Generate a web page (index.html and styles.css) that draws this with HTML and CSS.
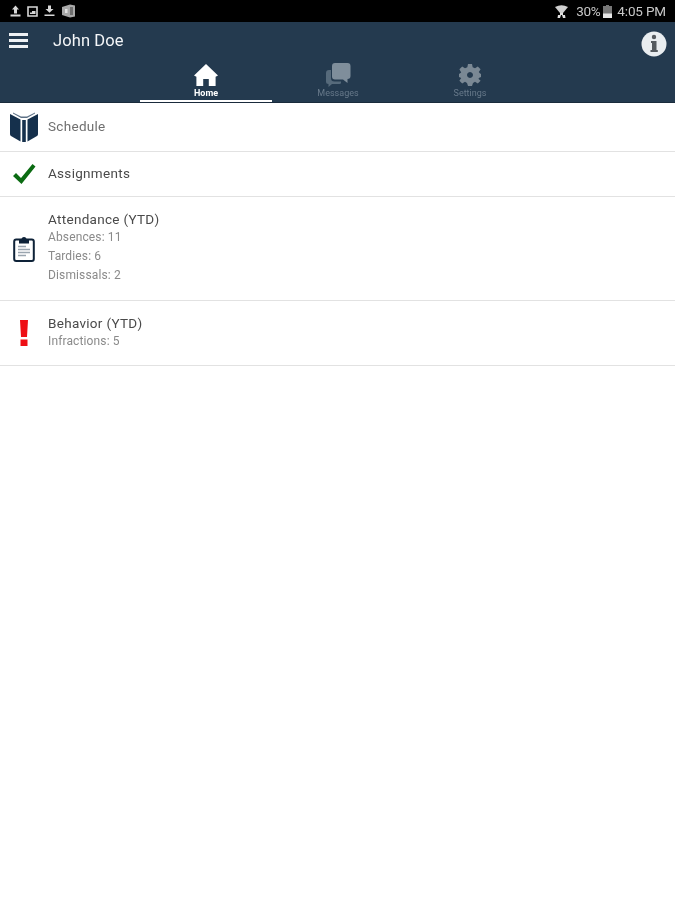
FILE: index.html
```html
<!DOCTYPE html>
<html lang="en">
<head>
<meta charset="utf-8">
<title>John Doe</title>
<link rel="stylesheet" href="styles.css">
</head>
<body>
<div class="status">
  <div class="status-left">
    <svg width="11" height="12" viewBox="0 0 11 12"><path d="M5.5 0.5 L9 4.5 H7 V8.5 H4 V4.5 H2 Z M0.5 9.5 H10.5 V11.5 H0.5 Z" fill="#d8d8d8"/></svg>
    <svg width="11" height="11" viewBox="0 0 11 11"><path d="M1 1 H10 V10 H1 Z" fill="none" stroke="#d8d8d8" stroke-width="1.6"/><path d="M5 5 H8.5 V8 H3 V6.5 H5 Z" fill="#d8d8d8"/></svg>
    <svg width="11" height="12" viewBox="0 0 11 12"><path d="M4 0.5 H7 V4 H9.5 L5.5 7.8 L1.5 4 H4 Z M0.5 9.5 H10.5 V11 H0.5 Z" fill="#d8d8d8"/></svg>
    <svg width="15" height="14" viewBox="0 0 15 14"><path d="M1 3 L9 0.5 L14 1.5 V12.5 L9 13.5 L1 11 Z" fill="#a9a9a9"/><path d="M9 3 H12 V11 H9 Z" fill="#6e6e6e"/><path d="M4 5 H6.5 V9 H4 Z" fill="#e2e2e2"/></svg>
  </div>
  <div class="status-right">
    <svg class="wifi" width="13" height="13" viewBox="0 0 13 13"><path d="M0 2 Q6.5 -1.6 13 2 L8 8 H5 Z" fill="#cfcfcf"/><path d="M5 8 H8 V10 H5 Z M3 10 H6 L5 13 H2.5 Z M7 10 H10 L10.5 13 H8 Z" fill="#e0e0e0"/></svg>
    <span class="pct">30%</span>
    <svg class="batt" width="9" height="13" viewBox="0 0 9 13"><path d="M3 0 H6 V1 H9 V13 H0 V1 H3 Z" fill="#777"/><path d="M0 8.5 H9 V13 H0 Z" fill="#e8e8e8"/></svg>
    <span class="time">4:05 PM</span>
  </div>
</div>

<header class="appbar">
  <div class="appbar-top">
    <div class="menu"><i></i><i></i><i></i></div>
    <div class="name">John Doe</div>
    <svg class="info" width="26" height="26" viewBox="0 0 26 26"><circle cx="13" cy="13" r="12.5" fill="#e9edf0"/><path d="M10.8 6 a2.2 2.2 0 1 0 4.4 0 a2.2 2.2 0 1 0 -4.4 0 Z M10 10 H15.5 V19 H16.8 V21 H9.5 V19 H11 V12 H10 Z" fill="#555a5f"/></svg>
  </div>
  <nav class="tabs">
    <div class="tab tab-on">
      <svg width="24" height="24" viewBox="0 0 24 24"><path d="M12 1 L24 12.5 L21.6 13.8 V23 H14.8 V16 H9.2 V23 H2.4 V13.8 L0 12.5 Z" fill="#fff"/></svg>
      <span>Home</span>
    </div>
    <div class="tab">
      <svg width="26" height="24" viewBox="0 0 26 24"><path d="M6 7 V15 A3.5 3.5 0 0 0 9.5 18.5 H16 V19.5 A1.5 1.5 0 0 1 14.5 21 H7 L3.5 24 V21 A2.5 2.5 0 0 1 1 18.5 V10 A3 3 0 0 1 4 7 Z" fill="#566a7b"/><path d="M7 3 a3 3 0 0 1 3 -3 H22.5 a3 3 0 0 1 3 3 V13 a3 3 0 0 1 -3 3 V20 L18 16.5 H10 A3 3 0 0 1 7 13.5 Z" fill="#7f8e9b"/></svg>
      <span>Messages</span>
    </div>
    <div class="tab">
      <svg width="24" height="24" viewBox="0 0 24 24"><path fill-rule="evenodd" fill="#7a8894" d="M10 1 H14 L14.7 4.2 L17 5.2 L19.8 3.4 L22.6 6.2 L20.8 9 L21.8 10.3 L23 11 V14 L20.8 15 L20.6 16 L22.6 17.8 L19.8 20.6 L17 18.8 L15 20 L14 23 H10 L9 20 L7 18.8 L4.2 20.6 L1.4 17.8 L3.2 15 L1 14 V11 L3.2 9.5 L1.4 6.2 L4.2 3.4 L7 5.2 L9.3 4.2 Z M12 9 a3 3 0 1 0 0.01 0 Z"/></svg>
      <span>Settings</span>
    </div>
  </nav>
</header>

<main class="list">
  <section class="row row-schedule">
    <div class="ic">
      <svg width="30" height="30" viewBox="0 0 30 30"><path d="M1 2 L11.5 7.5 V29.5 L2 24 Q1 23.4 1 22 Z" fill="#15304c"/><path d="M29 2 L18.5 7.5 V29.5 L28 24 Q29 23.4 29 22 Z" fill="#15304c"/><path d="M13.2 8 H16.8 V30 H13.2 Z" fill="#15304c"/><path d="M4 0.5 L12 4.5 H18 L26 0.5 V1.5 L18 6 H12 L4 1.5 Z" fill="#5d7186"/></svg>
    </div>
    <div class="txt"><div class="title title-muted">Schedule</div></div>
  </section>
  <section class="row row-assign">
    <div class="ic">
      <svg width="24" height="22" viewBox="0 0 24 22"><path d="M1 13 L4 10 L9 15 L20.5 1 L23.5 3.5 L9.5 21 Z" fill="#0b6b12"/></svg>
    </div>
    <div class="txt"><div class="title">Assignments</div></div>
  </section>
  <section class="row row-attend">
    <div class="ic">
      <svg width="22" height="26" viewBox="0 0 22 26"><rect x="1.2" y="3.5" width="19.6" height="21.5" rx="2" fill="#fff" stroke="#0e2238" stroke-width="2"/><path d="M6 3.5 H8.5 a2.5 2.5 0 0 1 5 0 H16 V7.5 H6 Z" fill="#0e2238"/><path d="M5 10.5 H13 M5 13.5 H17 M5 16.5 H17 M5 19.5 H13" stroke="#9aa5af" stroke-width="1.4"/></svg>
    </div>
    <div class="txt">
      <div class="title">Attendance (YTD)</div>
      <div class="sub">Absences: 11</div>
      <div class="sub">Tardies: 6</div>
      <div class="sub">Dismissals: 2</div>
    </div>
  </section>
  <section class="row row-behave">
    <div class="ic">
      <svg width="10" height="26" viewBox="0 0 10 26"><path d="M1 0 H9 L8 17 H2 Z M1.5 19.5 H8.5 V26 H1.5 Z" fill="#ee0f15"/></svg>
    </div>
    <div class="txt">
      <div class="title">Behavior (YTD)</div>
      <div class="sub">Infractions: 5</div>
    </div>
  </section>
</main>
</body>
</html>
```
FILE: styles.css
```css
* { box-sizing: border-box; }
html, body { margin: 0; padding: 0; background: #fff; }
body { width: 675px; height: 900px; overflow: hidden; font-family: Roboto, "Liberation Sans", sans-serif; }

.status { height: 22px; background: #000; display: flex; justify-content: space-between; align-items: center; padding: 0 9px 0 10px; }
.status-left { display: flex; align-items: center; gap: 6px; filter: blur(0.4px); }
.status-right { display: flex; align-items: center; color: #c8c8c8; font-size: 13.5px; filter: blur(0.4px); }
.wifi { margin-right: 8px; }
.pct { margin-right: 3px; letter-spacing: -0.3px; }
.batt { margin-right: 5px; }
.time { letter-spacing: -0.15px; }

.appbar { height: 81px; background: #243a4f; border-bottom: 1px solid #1a2b3c; }
.appbar-top { height: 33px; display: flex; align-items: center; padding: 0 8px 0 9px; filter: blur(0.3px); }
.menu { width: 19px; display: flex; flex-direction: column; gap: 3px; margin-right: 25px; margin-top: 4px; }
.menu i { display: block; height: 3px; background: #eef1f4; }
.name { color: #f4f6f8; font-size: 16.5px; letter-spacing: 0.1px; flex: 1; margin-top: 3px; }
.info { margin-top: 10px; }

.tabs { display: flex; padding-left: 140px; height: 47px; }
.tab { width: 132px; height: 47px; display: flex; flex-direction: column; align-items: center; color: #67798a; font-size: 9px; padding-top: 8px; filter: blur(0.35px); }
.tab svg { display: block; flex: none; }
.tab span { line-height: 10px; margin-top: 1px; }
.tab-on { color: #fff; font-weight: 700; border-bottom: 2px solid #fff; }

.list { display: block; }
.row { display: flex; align-items: center; border-bottom: 1px solid #e2e2e2; }
.row-schedule { height: 49px; }
.row-assign { height: 45px; }
.row-attend { height: 104px; }
.row-behave { height: 65px; }
.ic { width: 48px; flex: none; display: flex; justify-content: center; filter: blur(0.3px); }
.txt { flex: 1; padding-bottom: 1px; filter: blur(0.35px); }
.title { font-size: 13.5px; line-height: 16px; margin-bottom: 1px; color: #4a4a4a; letter-spacing: 0.3px; }
.title-muted { color: #6f6f6f; }
.sub { font-size: 12px; line-height: 19px; color: #8a8a8a; letter-spacing: 0.13px; }
```
